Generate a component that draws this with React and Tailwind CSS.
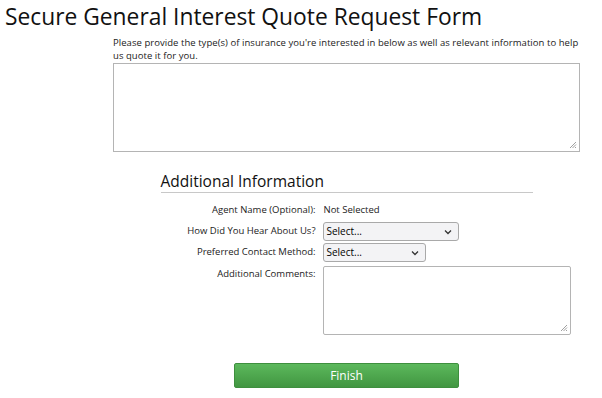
import React from 'react';

const font = { fontFamily: '"Open Sans", "Liberation Sans", sans-serif' };

const Caret = () => (
  <svg width="8" height="6" viewBox="0 0 8 6" className="shrink-0">
    <path d="M1 1.5 L4 4.5 L7 1.5" fill="none" stroke="#333" strokeWidth="1.3" />
  </svg>
);

const Select = ({ width }) => (
  <div
    className={`flex items-center justify-between h-[19px] pl-[3px] pr-[6px] border border-[#a9a9a9] rounded-[3px] bg-[#f3f3f5] text-[10px] text-black ${width}`}
  >
    <span>Select...</span>
    <Caret />
  </div>
);

const Resize = () => (
  <svg width="8" height="8" viewBox="0 0 8 8" className="absolute right-[2px] bottom-[2px]">
    <path d="M7 1 L1 7 M7 3.5 L3.5 7 M7 6 L6 7" stroke="#888" strokeWidth="0.8" />
  </svg>
);

const Label = ({ children, className = '' }) => (
  <span className={`w-[155px] shrink-0 text-right text-[#222] ${className}`}>{children}</span>
);

export default function App() {
  return (
    <div className="w-[602px] h-[398px] bg-white text-black overflow-hidden" style={font}>
      <h1 className="pl-[5px] pt-[1px] text-[22.8px] leading-[32px] text-[#111]">
        Secure General Interest Quote Request Form
      </h1>

      <div className="ml-[113px] w-[467px]">
        <p className="mt-[3px] text-[9.5px] leading-[13px] tracking-[0.05px] text-[#222]">
          Please provide the type(s) of insurance you're interested in below as well as relevant information to help
          us quote it for you.
        </p>
        <div className="relative mt-[1px] h-[89px] border border-[#b4b4b4] bg-white">
          <Resize />
        </div>

        <div className="mx-auto mt-[18px] w-[372px]">
          <h2 className="text-[15.5px] leading-[22px] text-[#111] border-b border-[#c8c8c8]">
            Additional Information
          </h2>

          <div className="mt-[11px] flex flex-col text-[9.5px]">
            <div className="flex items-center h-[12px]">
              <Label>Agent Name (Optional):</Label>
              <span className="ml-[8px] text-[#222]">Not Selected</span>
            </div>
            <div className="mt-[6px] flex items-center">
              <Label>How Did You Hear About Us?</Label>
              <div className="ml-[7px] shrink-0">
                <Select width="w-[136px]" />
              </div>
            </div>
            <div className="mt-[2px] flex items-center">
              <Label>Preferred Contact Method:</Label>
              <div className="ml-[7px] shrink-0">
                <Select width="w-[103px]" />
              </div>
            </div>
            <div className="mt-[4px] flex items-start">
              <Label className="pt-[1px]">Additional Comments:</Label>
              <div className="ml-[7px] shrink-0 relative w-[248px] h-[69px] border border-[#b4b4b4] rounded-[2px] bg-white">
                <Resize />
              </div>
            </div>
          </div>
        </div>

        <div className="mt-[28px] flex justify-center">
          <button className="w-[225px] h-[25px] rounded-[2px] bg-gradient-to-b from-[#5cb85c] to-[#419641] border border-[#3e8f3e] text-white text-[12px]">
            Finish
          </button>
        </div>
      </div>
    </div>
  );
}
